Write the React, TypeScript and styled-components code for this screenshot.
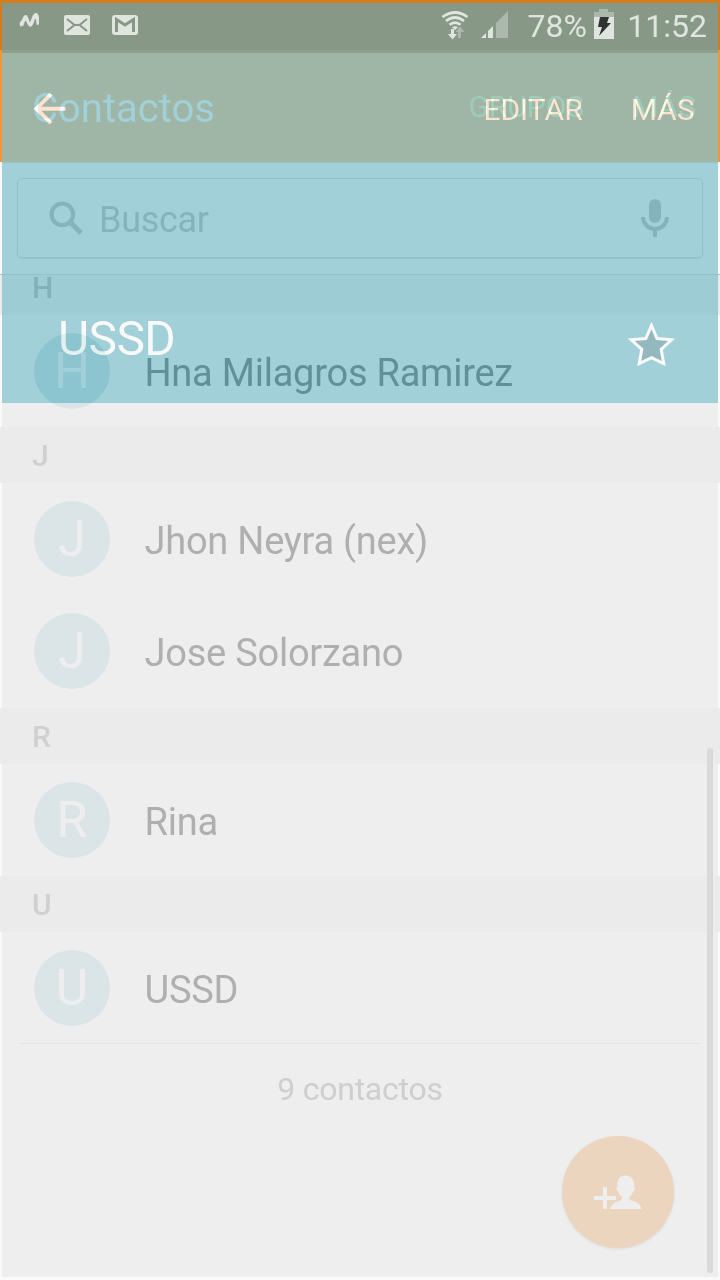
import React from "react";
import styled, { createGlobalStyle } from "styled-components";

const GlobalStyle = createGlobalStyle`
  * { box-sizing: border-box; }
  body { margin: 0; background: #fafafa; }
`;

const Screen = styled.div`
  position: relative;
  isolation: isolate;
  width: 720px;
  height: 1280px;
  overflow: hidden;
  display: flex;
  flex-direction: column;
  background: #fafafa;
  font-family: Roboto, "Liberation Sans", sans-serif;
`;

const StatusBar = styled.header`
  height: 50px;
  flex: none;
  display: flex;
  align-items: flex-start;
  justify-content: space-between;
  border: solid #d57c1e;
  border-width: 3px 2px 0;
  background: #879986;
  color: #e0e5e0;
`;

const StatusGroup = styled.div`
  display: flex;
  height: 47px;
`;

const StatusText = styled.span<{ $before: number; $after?: number }>`
  margin: 0 ${(p) => p.$after ?? 0}px 0 ${(p) => p.$before}px;
  font-size: 32px;
  line-height: 47px;
  white-space: nowrap;
`;

const AppBar = styled.div`
  height: 112px;
  flex: none;
  display: flex;
  justify-content: space-between;
  padding: 5px 22px 0 30px;
  border: solid #f09834;
  border-width: 0 2px;
  background: linear-gradient(#8d9f8d 3px, #9fb5a5 3px);
`;

const Title = styled.h1`
  margin: 0;
  font-size: 40px;
  font-weight: 400;
  line-height: 108px;
  color: #a1d0d9;
`;

const Actions = styled.div<{ $color: string; $gap: number; $line: number }>`
  display: flex;
  gap: ${(p) => p.$gap}px;
  font-size: 30px;
  line-height: ${(p) => p.$line}px;
  color: ${(p) => p.$color};
`;

const SearchArea = styled.div`
  height: 112px;
  flex: none;
  padding: 16px 15px 0;
  border: solid #fafafa;
  border-width: 0 2px;
  background: linear-gradient(#98c3c4 1px, #9fcdd5 1px 2px, #a2d0d9 2px);
`;

const SearchBox = styled.div`
  height: 80px;
  display: flex;
  align-items: center;
  padding: 0 32px 0 30px;
  border: 1px solid #92c0c9;
  border-radius: 5px;
  box-shadow: 0 1px 1px #98c6cf;
`;

const Placeholder = styled.span`
  flex: 1;
  margin-left: 15px;
  padding-top: 4px;
  font-size: 36px;
  line-height: 44px;
  letter-spacing: -0.3px;
  color: #85b3bc;
`;

const List = styled.main`
  height: 769px;
  flex: none;
  border-top: 1px solid #97c1c9;
`;

const Heading = styled.h2<{ $tinted?: boolean }>`
  height: ${(p) => (p.$tinted ? 40 : 56)}px;
  margin: 0;
  padding-left: 30px;
  display: flex;
  align-items: flex-end;
  overflow: hidden;
  font-size: 30px;
  font-weight: 500;
  line-height: 55px;
  border: solid #ebebeb;
  border-width: 0 2px;
  background: ${(p) => (p.$tinted ? "#9eccd5" : "#ebebeb")};
  color: ${(p) => (p.$tinted ? "#83b1ba" : "#d0d0d0")};
`;

const Row = styled.div<{ $tinted?: boolean; $tall?: boolean }>`
  height: ${(p) => (p.$tall ? 113 : 112)}px;
  display: flex;
  align-items: flex-start;
  padding: 18px 0 0 32px;
  border: solid #fafafa;
  border-width: 0 2px;
  background: ${(p) => (p.$tinted ? "linear-gradient(#a2d0d9 88px, #eee 88px)" : "#eee")};
`;

const Avatar = styled.div<{ $tinted?: boolean }>`
  width: 76px;
  height: 76px;
  border-radius: 50%;
  text-align: center;
  font-size: 50px;
  font-weight: 400;
  line-height: 76px;
  background: ${(p) => (p.$tinted ? "linear-gradient(#8cc5cf 70px, #dbe5e7 70px)" : "#dbe5e7")};
  color: ${(p) => (p.$tinted ? "#a2d0d9" : "#eee")};
`;

const Name = styled.span<{ $tinted?: boolean }>`
  margin-left: 34.5px;
  font-size: 38px;
  line-height: 81px;
  letter-spacing: -0.24px;
  white-space: nowrap;
  color: ${(p) => (p.$tinted ? "#609098" : "#afafaf")};
`;

const Footer = styled.footer`
  height: 234px;
  flex: none;
  margin: 0 2px;
  padding: 0 18px;
  background: #eee;
`;

const Count = styled.div`
  border-top: 1px solid #e3e3e3;
  text-align: center;
  font-size: 32px;
  line-height: 91px;
  letter-spacing: -0.25px;
  color: #cecece;
`;

const ScrollThumb = styled.div`
  position: absolute;
  top: 748px;
  right: 7px;
  width: 6px;
  height: 525px;
  border-radius: 3px;
  background: #d9d9d9;
`;

const Fab = styled.div`
  position: absolute;
  right: 46px;
  bottom: 32px;
  width: 112px;
  height: 112px;
  border-radius: 50%;
  background: #ecd5be;
  box-shadow: 0 1px 3px rgba(0, 0, 0, 0.08);
`;

/* The detail page fading in over the list. */
const Incoming = styled.div`
  position: absolute;
  inset: 54px 0 auto;
  height: 349px;
  mix-blend-mode: plus-lighter;
  color: #5c2e2b;
`;

const IncomingBar = styled.div`
  height: 109px;
  display: flex;
  justify-content: space-between;
  padding: 2px 25.5px 0 32px;
`;

const IncomingTitle = styled.div`
  padding: 145px 0 0 58px;
  font-size: 48px;
  line-height: 61px;
  letter-spacing: -0.6px;
  color: #582a21;
`;

const Favorite = styled.svg`
  position: absolute;
  top: 320px;
  right: 44px;
`;

type Contact = { name: string; tinted?: boolean; tall?: boolean };
const sections: { letter: string; tinted?: boolean; contacts: Contact[] }[] = [
  { letter: "H", tinted: true, contacts: [{ name: "Hna Milagros Ramirez", tinted: true }] },
  { letter: "J", contacts: [{ name: "Jhon Neyra (nex)" }, { name: "Jose Solorzano", tall: true }] },
  { letter: "R", contacts: [{ name: "Rina" }] },
  { letter: "U", contacts: [{ name: "USSD" }] },
];

const Notifications = () => (
  <svg width="150" height="47" viewBox="2 3 150 47" fill="none">
    <path d="M21.300 27C19 25.500 19 21.500 21.500 20.800 22.500 18.500 23.500 15 25.800 15c2.200 0 2.800 5 4.200 7.500C31.500 20 32.500 13 36 13c3 0 3.500 5 2.800 11.500-1.600.8-2.300.3-2.400-1.200-.1-2.300-.3-4.500-.9-4.500-1.200 0-2 8-5.200 8-2.600 0-3.500-6-4.800-6-.8 0-1.200 3-2 4.700-.8 1-1.600.500-1.700-.500-.500.500-.400 1.500 0 2z" fill="#e0e5e0" />
    <rect x="64" y="15" width="26" height="20" rx="2" fill="#e0e5e0" />
    <path d="M67 19l7.500 6h5l7.500-6M67 31l7.500-6M87 31l-7.500-6" stroke="#879986" strokeWidth="2.200" />
    <rect x="112" y="15" width="26" height="20" rx="3" fill="#e0e5e0" />
    <path d="M116.500 32V19.500l8.500 5.500 8.500-5.500v12.500" stroke="#879986" strokeWidth="3" />
  </svg>
);

const Signals = () => (
  <svg width="70" height="47" viewBox="440 3 70 47" fill="none">
    <g stroke="#e0e5e0" strokeWidth="2.700">
      <path d="M442.500 17q12.500-9 25 0" />
      <path d="M446 21q9-7 18 0" />
      <path d="M449.500 24.800q5.500-4.500 11 0" />
    </g>
    <path d="M452 27.300q3-2 6 0l-3 2.700z" fill="#e0e5e0" />
    <path d="M451 29h3v5h3l-4.500 5.500L448 34h3z" fill="#e0e5e0" />
    <path d="M458 38v-6h-2.500l4.500-5.500 4.500 5.500H461v6z" fill="#acb8ab" />
    <path d="M496 38V23l12-12v27z" fill="#acb8ab" />
    <path d="M481 38l5-5v5zM488 38v-7l5-5V38z" fill="#e0e5e0" />
  </svg>
);

const Battery = () => (
  <svg width="20" height="47" viewBox="594 3 20 47">
    <path d="M594 12h5V9h9v3h6v6h-20z" fill="#acb8ab" />
    <path d="M594 17h20v22h-20z" fill="#e0e5e0" />
    <path d="M600 17h9l-2 6h4l-12 13 3-9h-4z" fill="#2f3431" />
  </svg>
);

export default function App() {
  return (
    <>
      <GlobalStyle />
      <Screen>
        <StatusBar>
          <StatusGroup><Notifications /></StatusGroup>
          <StatusGroup>
            <Signals />
            <StatusText $before={17} $after={7}>78%</StatusText>
            <Battery />
            <StatusText $before={13.5} $after={11}>11:52</StatusText>
          </StatusGroup>
        </StatusBar>
        <AppBar>
          <Title>Contactos</Title>
          <Actions $color="#9fcdbb" $gap={48} $line={103}><span>GRUPOS</span><span>MÁS</span></Actions>
        </AppBar>
        <SearchArea>
          <SearchBox>
            <svg width="36" height="36" viewBox="48 200 36 36" fill="none" stroke="#85b3bc">
              <circle cx="62.300" cy="214.300" r="10.800" strokeWidth="4.200" />
              <path d="M70.500 222.500l10.500 10.500" strokeWidth="5" />
            </svg>
            <Placeholder>Buscar</Placeholder>
            <svg width="30" height="40" viewBox="640 198 30 40" fill="none">
              <rect x="649" y="199" width="12" height="24" rx="6" fill="#85b3bc" />
              <path d="M643 217a12 12 0 0 0 24 0" stroke="#85b3bc" strokeWidth="4" />
              <path d="M655 229v8" stroke="#85b3bc" strokeWidth="4" />
            </svg>
          </SearchBox>
        </SearchArea>
        <List>
          {sections.map((s) => (
            <section key={s.letter}>
              <Heading $tinted={s.tinted}>{s.letter}</Heading>
              {s.contacts.map((c) => (
                <Row key={c.name} $tinted={c.tinted} $tall={c.tall}>
                  <Avatar $tinted={c.tinted}>{c.name[0]}</Avatar>
                  <Name $tinted={c.tinted}>{c.name}</Name>
                </Row>
              ))}
            </section>
          ))}
        </List>
        <Footer><Count>9 contactos</Count></Footer>
        <Fab>
          <svg width="112" height="112" viewBox="562 1136 112 112" fill="#eee">
            <path d="M594 1196h9v-9h4v9h9v4h-9v9h-4v-9h-9z" />
            <path d="M610 1209c1.500-5 5-7 8.500-8 3.500-.8 4.500-2.500 3-4.500-1.500-1-2.500-3-3-5-2.500-1-2.500-4-1.200-5-1-7 3-11 8.200-11s9.500 4 8.500 11c1.200 1 1.200 4-1 5-.5 2-1.500 4-3 5-1.500 2-.5 4 3 4.500 4 1 7 3 8.500 8z" />
          </svg>
        </Fab>
        <ScrollThumb />
        <Incoming>
          <IncomingBar>
            <svg width="36" height="109" viewBox="32 56 36 109" fill="none" stroke="currentColor" strokeWidth="4">
              <path d="M65.500 108.700H37M51 94.200L36.500 108.700L51 123.200" />
            </svg>
            <Actions $color="#5c2e2b" $gap={48} $line={107}><span>EDITAR</span><span>MÁS</span></Actions>
          </IncomingBar>
          <IncomingTitle>USSD</IncomingTitle>
        </Incoming>
        <Favorite width="50" height="50" viewBox="626 320 50 50">
          <path d="M651.500 325.500l5.500 13 14.500 1.300-10.300 9.500 2.500 14.400-12.200-6-12.300 6 2.600-14.400-10.500-9.500 14.500-1.300z" fill="#94b8bf" stroke="#fafafa" strokeWidth="3" />
        </Favorite>
      </Screen>
    </>
  );
}
